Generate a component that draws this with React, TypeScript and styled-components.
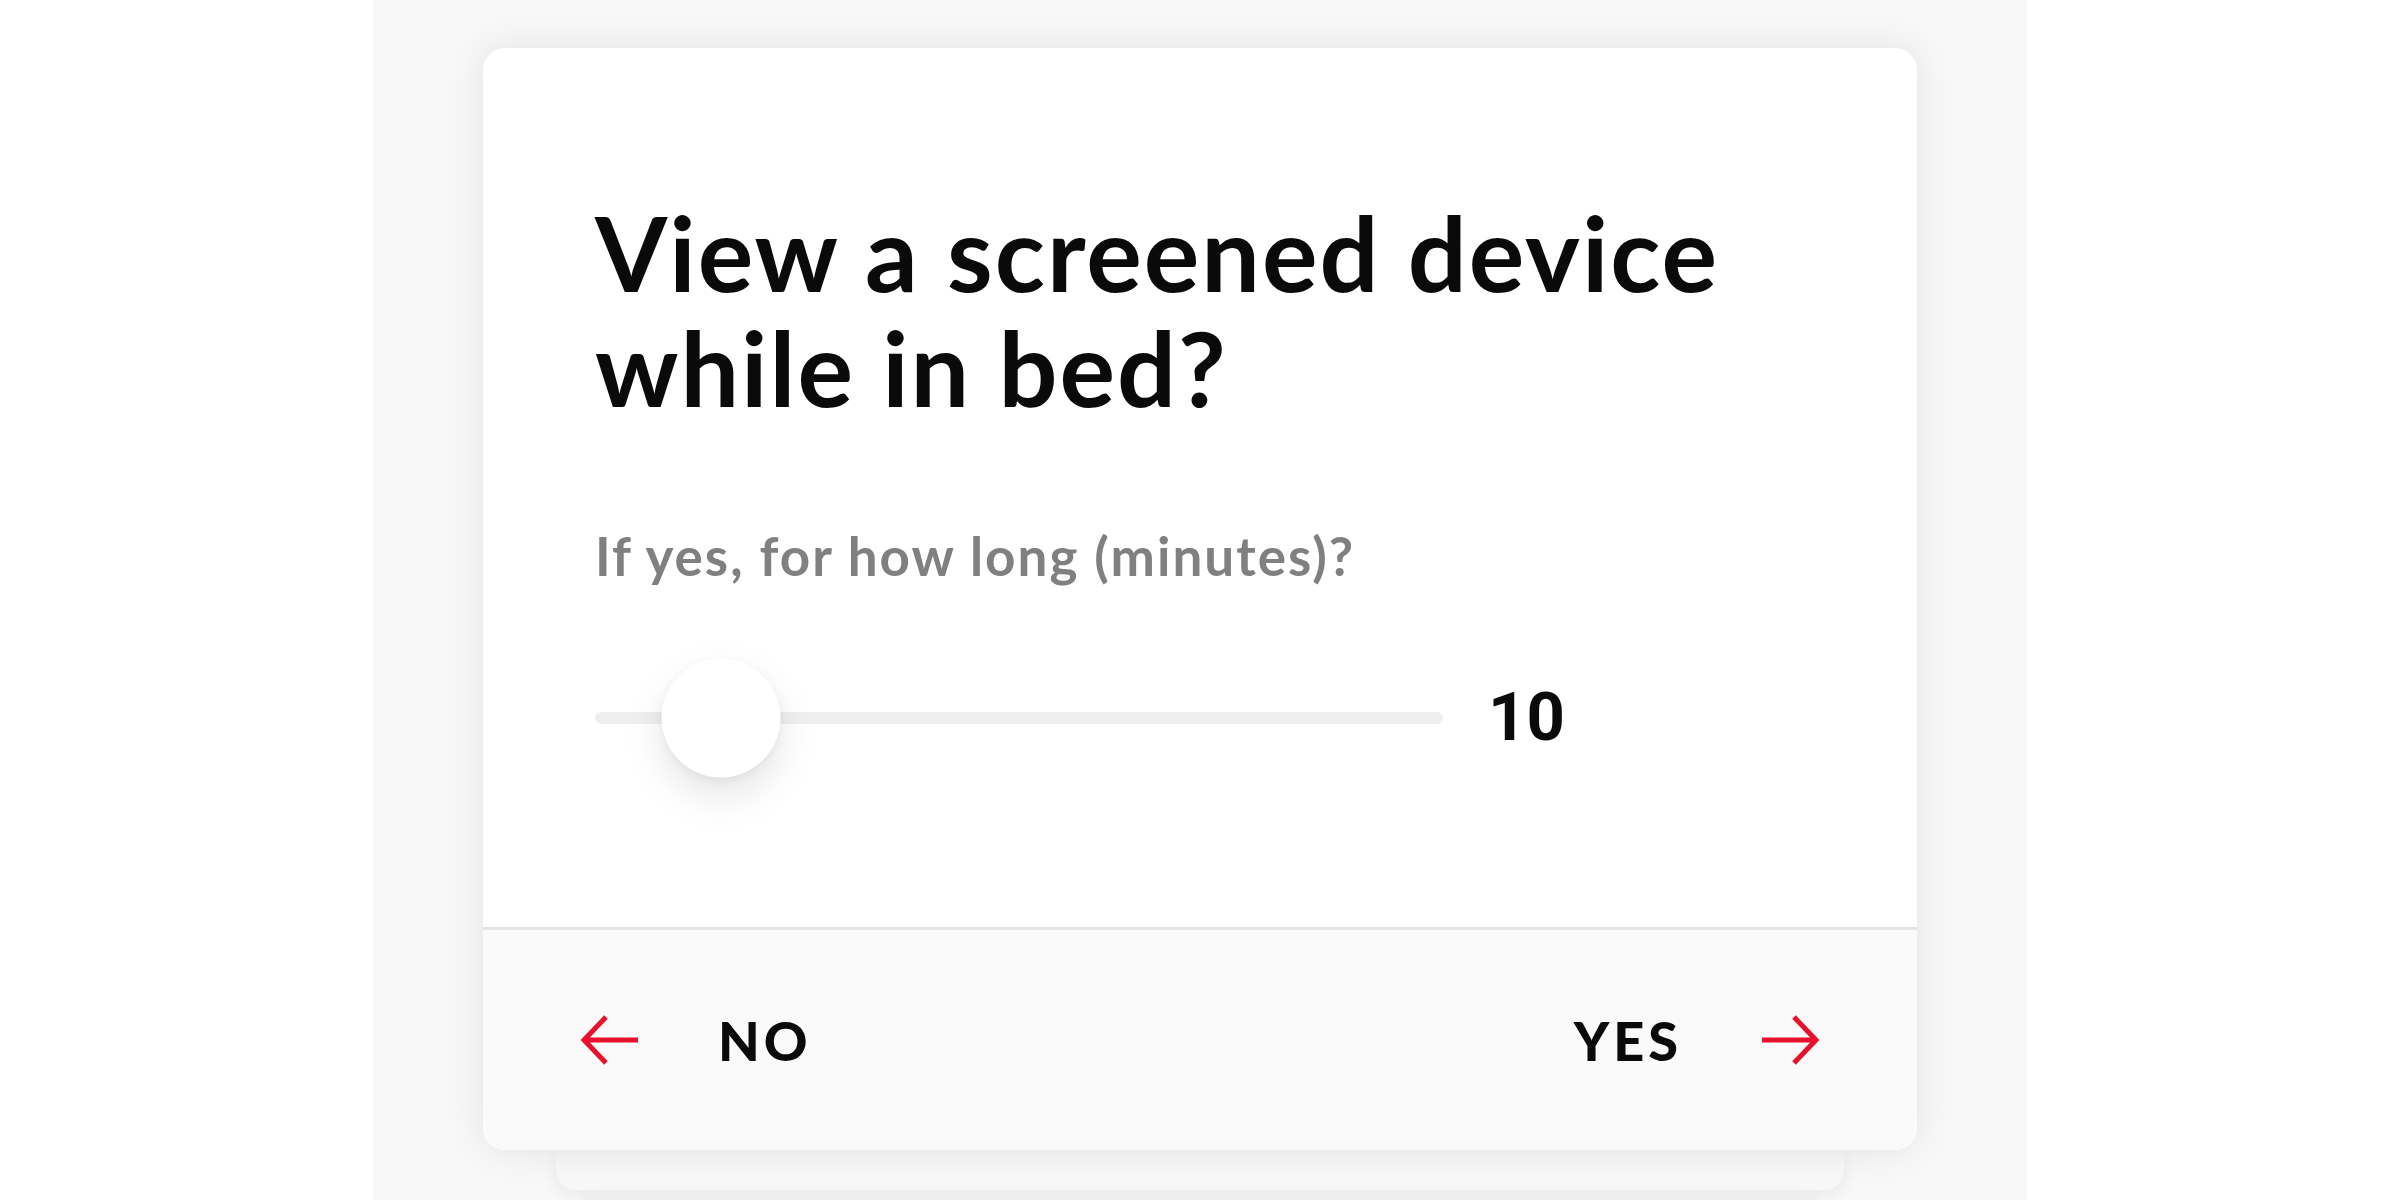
import React from 'react';
import styled, { createGlobalStyle } from 'styled-components';

const GlobalStyle = createGlobalStyle`
  html, body {
    margin: 0;
    padding: 0;
    background: #ffffff;
  }
  body {
    font-family: 'Lato', 'Liberation Sans', sans-serif;
  }
`;

const ArrowIcon = ({ dir }: { dir: 'left' | 'right' }) => (
  <svg width="60" height="52" viewBox="0 0 60 52" fill="none">
    {dir === 'left' ? (
      <path d="M58 26H4M26 3L4 26l22 23" stroke="#e8112d" strokeWidth="5" />
    ) : (
      <path d="M2 26h54M34 3l22 23-22 23" stroke="#e8112d" strokeWidth="5" />
    )}
  </svg>
);

const TRACK = 848;
const KNOB = 119;

const App = () => {
  const value = 10;
  const min = 5;
  const max = 60;
  const center = KNOB / 2 + ((value - min) / (max - min)) * (TRACK - KNOB);

  return (
    <>
      <GlobalStyle />
      <Page>
        <Column>
          <Card>
            <Body>
              <Title>
                View a screened device
                <br />
                while in bed?
              </Title>
              <Hint>If yes, for how long (minutes)?</Hint>
              <SliderRow>
                <Track>
                  <Thumb style={{ left: `${center}px` }} />
                </Track>
                <Value>{value}</Value>
              </SliderRow>
            </Body>
            <Footer>
              <Choice>
                <ArrowIcon dir="left" />
                <ChoiceLabel>NO</ChoiceLabel>
              </Choice>
              <Choice>
                <ChoiceLabel>YES</ChoiceLabel>
                <ArrowIcon dir="right" />
              </Choice>
            </Footer>
          </Card>
          <DeckEdge inset={73} tone="#f8f8f8" />
          <DeckEdge inset={105} tone="#eeeeee" />
        </Column>
      </Page>
    </>
  );
};

export default App;

const Page = styled.div`
  display: flex;
  justify-content: center;
  width: 100%;
  height: 1200px;
  overflow: hidden;
`;

const Column = styled.div`
  display: flex;
  flex-direction: column;
  align-items: center;
  width: 1654px;
  height: 100%;
  padding-top: 48px;
  box-sizing: border-box;
  background: #f8f8f8;
`;

const Card = styled.div`
  position: relative;
  z-index: 3;
  flex-shrink: 0;
  display: flex;
  flex-direction: column;
  width: 1434px;
  height: 1102px;
  border-radius: 22px;
  overflow: hidden;
  background: #ffffff;
  box-shadow: 0 0 40px rgba(0, 0, 0, 0.09);
`;

const Body = styled.div`
  flex: 1;
  display: flex;
  flex-direction: column;
  padding: 146px 112px 0;
`;

const Title = styled.h1`
  margin: 0;
  font-family: 'Lato', 'Liberation Sans', sans-serif;
  font-size: 104px;
  font-weight: 700;
  line-height: 115px;
  letter-spacing: 2px;
  color: #0a0a0a;
`;

const Hint = styled.p`
  margin: 102px 0 0;
  font-family: 'Lato', 'Liberation Sans', sans-serif;
  font-size: 53px;
  font-weight: 700;
  line-height: 60px;
  letter-spacing: 2px;
  color: #808080;
`;

const SliderRow = styled.div`
  display: flex;
  align-items: center;
  gap: 45px;
  margin-top: 98px;
`;

const Track = styled.div`
  position: relative;
  width: ${TRACK}px;
  height: 12px;
  border-radius: 6px;
  background: #efefef;
`;

const Thumb = styled.div`
  position: absolute;
  top: 50%;
  width: ${KNOB}px;
  height: ${KNOB}px;
  border-radius: 50%;
  background: #ffffff;
  transform: translate(-50%, -50%);
  box-shadow: 0 18px 40px rgba(0, 0, 0, 0.1), 0 4px 10px rgba(0, 0, 0, 0.05);
`;

const Value = styled.span`
  font-family: 'Roboto', 'Liberation Sans', sans-serif;
  font-size: 67px;
  font-weight: 700;
  line-height: 1;
  color: #0a0a0a;
`;

const Footer = styled.div`
  display: flex;
  align-items: center;
  justify-content: space-between;
  flex-shrink: 0;
  height: 220px;
  padding: 0 97px;
  border-top: 3px solid #e4e4e4;
  background: #fafafa;
`;

const Choice = styled.div`
  display: flex;
  align-items: center;
  gap: 78px;
`;

const ChoiceLabel = styled.span`
  font-family: 'Lato', 'Liberation Sans', sans-serif;
  font-size: 54px;
  font-weight: 900;
  letter-spacing: 4px;
  color: #0a0a0a;
`;

const DeckEdge = styled.div<{ inset: number; tone: string }>`
  flex-shrink: 0;
  width: ${p => 1434 - p.inset * 2}px;
  height: 40px;
  border-radius: 0 0 20px 20px;
  background: ${p => p.tone};
  box-shadow: 0 6px 18px rgba(0, 0, 0, 0.06);
`;
